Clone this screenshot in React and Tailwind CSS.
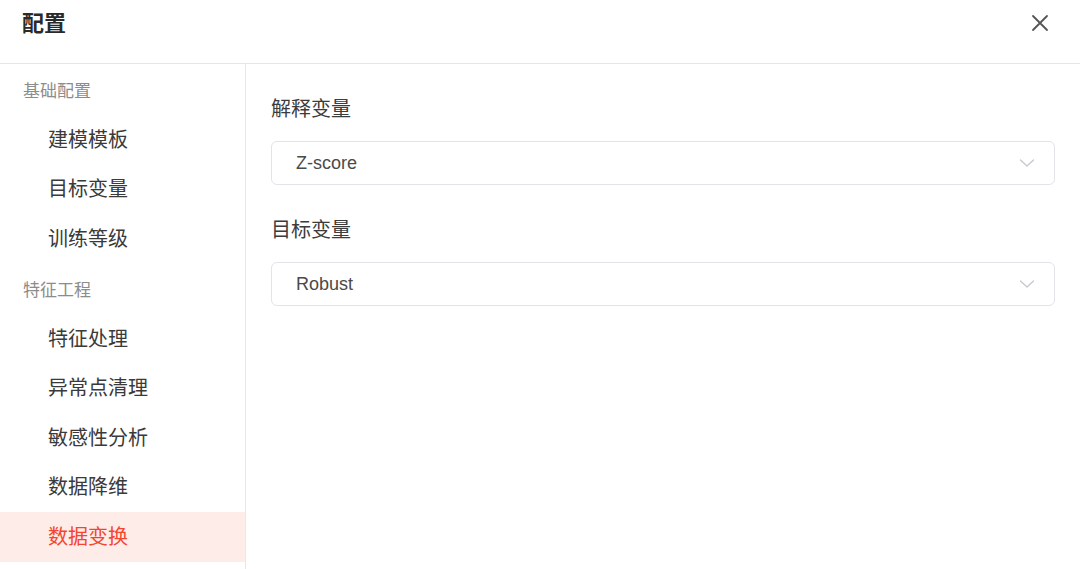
import React from 'react';

const font = { fontFamily: '"Liberation Sans", "Noto Sans CJK SC", sans-serif' };

const menu = [
  { group: '基础配置', items: ['建模模板', '目标变量', '训练等级'] },
  { group: '特征工程', items: ['特征处理', '异常点清理', '敏感性分析', '数据降维', '数据变换'] },
];

function Chevron() {
  return (
    <svg width="18" height="18" viewBox="0 0 18 18" fill="none" stroke="#c8c9d0" strokeWidth="1.4" strokeLinecap="round" strokeLinejoin="round">
      <path d="M2.5 6 L9 12 L15.5 6" />
    </svg>
  );
}

function Select({ label, value }) {
  return (
    <div className="flex flex-col">
      <div className="h-[37px] flex items-center text-[20px] text-[#3c3c3c]">{label}</div>
      <div className="mt-[14px] h-[44px] rounded-[6px] border border-[#e3e3ea] flex items-center justify-between pl-[24px] pr-[18px]">
        <span className="text-[18px] text-[#4a4a4a]">{value}</span>
        <Chevron />
      </div>
    </div>
  );
}

export default function App() {
  const [active, setActive] = React.useState('数据变换');

  return (
    <div className="w-[1080px] h-[569px] bg-white flex flex-col overflow-hidden" style={font}>
      {/* header */}
      <div className="h-[64px] shrink-0 flex items-center justify-between pl-[22px] pr-[30px] border-b border-[#e6e6e6]">
        <span className="text-[22px] font-bold text-[#2a2a2a] -mt-[16px]">配置</span>
        <button className="-mt-[17px] text-[#555]">
          <svg width="20" height="20" viewBox="0 0 20 20" stroke="currentColor" strokeWidth="1.8" strokeLinecap="round">
            <path d="M3 3 L17 17 M17 3 L3 17" />
          </svg>
        </button>
      </div>

      <div className="flex flex-1 min-h-0">
        {/* sidebar */}
        <div className="w-[246px] shrink-0 border-r border-[#e8e8e8] flex flex-col pt-[1px]">
          {menu.map((g) => (
            <div key={g.group} className="flex flex-col">
              <div className="h-[50px] flex items-center pl-[23px] text-[17px] text-[#8c8c8c] pt-[4px]">{g.group}</div>
              {g.items.map((it) => (
                <div
                  key={it}
                  onClick={() => setActive(it)}
                  className={`h-[49.6px] flex items-center pl-[48px] text-[20px] cursor-pointer ${
                    active === it ? 'bg-[#fdece7] text-[#f5442f]' : 'text-[#3a3a3a]'
                  }`}
                >
                  {it}
                </div>
              ))}
            </div>
          ))}
        </div>

        {/* content */}
        <div className="flex-1 pl-[25px] pr-[25px] pt-[26px] flex flex-col gap-[26px]">
          <Select label="解释变量" value="Z-score" />
          <Select label="目标变量" value="Robust" />
        </div>
      </div>
    </div>
  );
}
